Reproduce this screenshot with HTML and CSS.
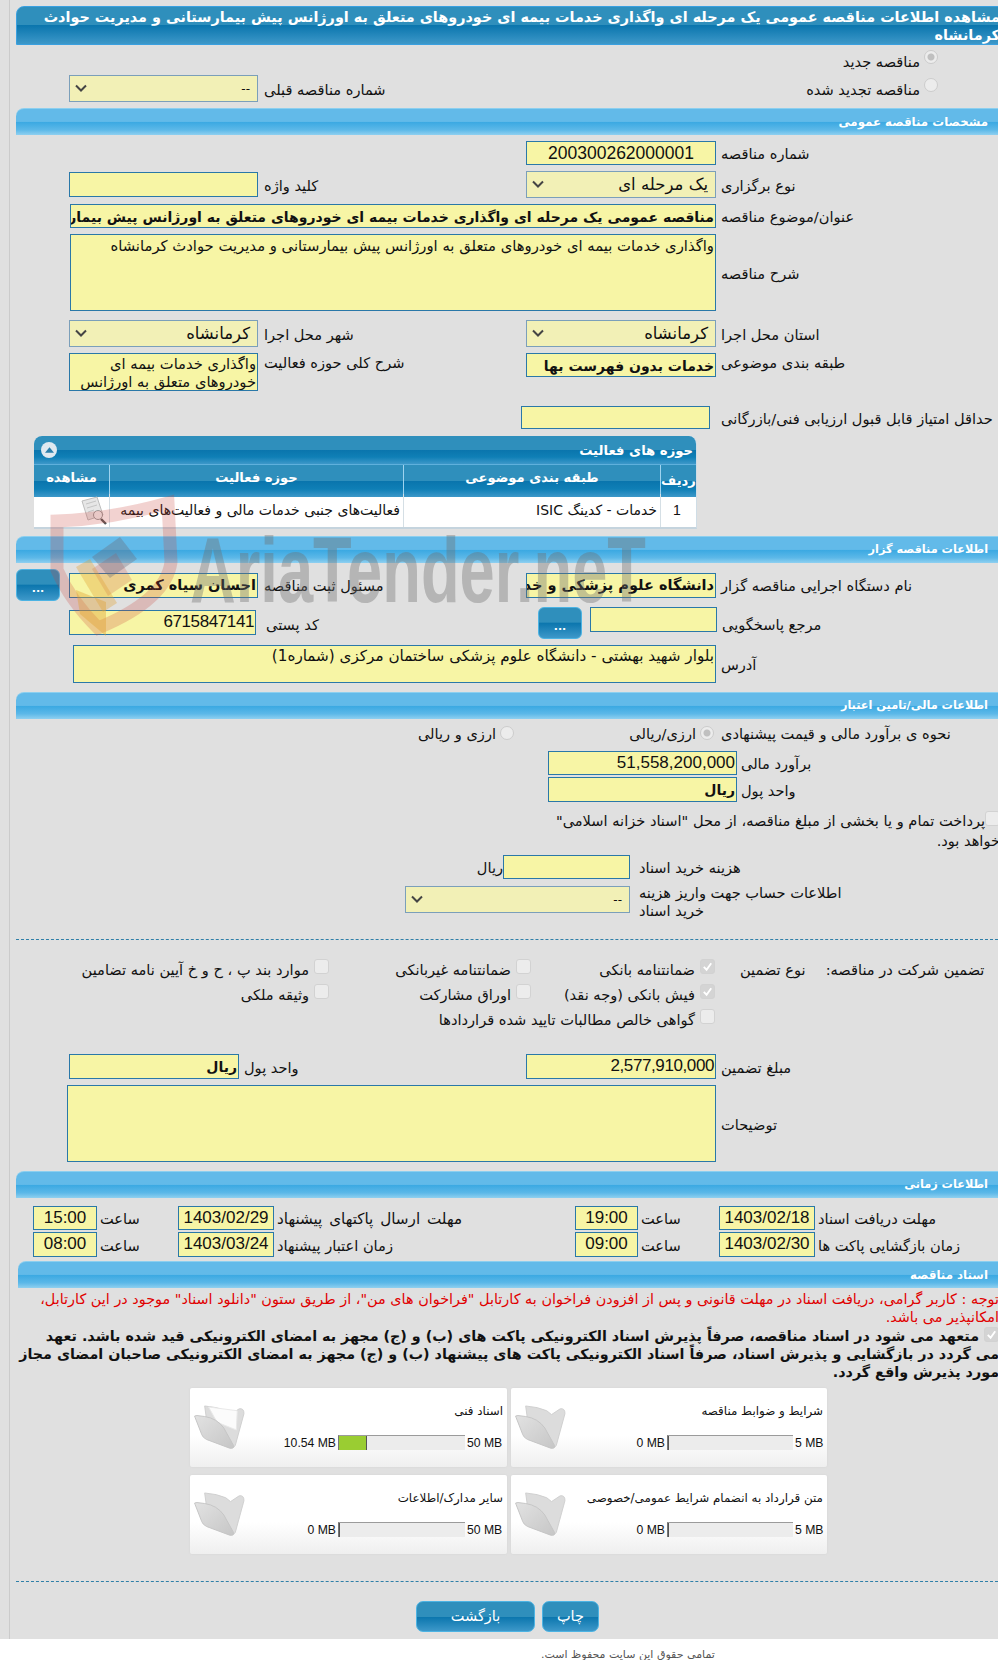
FILE: index.html
```html
<!DOCTYPE html>
<html lang="fa">
<head>
<meta charset="utf-8">
<title>مشاهده اطلاعات مناقصه</title>
<link rel="stylesheet" href="styles.css">
</head>
<body>
<div class="page">
<div class="content">

<div class="title-bar" dir="rtl">مشاهده اطلاعات مناقصه عمومی یک مرحله ای واگذاری خدمات بیمه ای خودروهای متعلق به اورژانس پیش بیمارستانی و مدیریت حوادث<br>کرمانشاه</div>

<div class="sec-a">
  <div class="row radio-top">
    <div class="cell-l"></div>
    <div class="radio-new"><span class="lb" dir="rtl">مناقصه جدید</span><span class="radio on"></span></div>
  </div>
  <div class="row prev-row">
    <div class="cell-l">
      <div class="fld sel w189 h27" dir="rtl"><span>--</span><svg class="chev" viewBox="0 0 12 8"><path d="M1 1.5l5 5 5-5" /></svg></div>
      <span class="lb" dir="rtl">شماره مناقصه قبلی</span>
    </div>
    <div class="radio-new"><span class="lb" dir="rtl">مناقصه تجدید شده</span><span class="radio"></span></div>
  </div>
</div>

<div class="sec-head first">مشخصات مناقصه عمومی</div>

<div class="stack">
  <div class="row">
    <div class="cell-l"></div>
    <div class="cell-r">
      <div class="fld w190 h24 num center wide-num">200300262000001</div>
      <span class="lb" dir="rtl">شماره مناقصه</span>
    </div>
  </div>
  <div class="row">
    <div class="cell-l">
      <div class="fld w189 h25 self-c"></div>
      <span class="lb" dir="rtl">کلید واژه</span>
    </div>
    <div class="cell-r">
      <div class="fld sel w190 h27 big" dir="rtl"><span>یک مرحله ای</span><svg class="chev" viewBox="0 0 12 8"><path d="M1 1.5l5 5 5-5" /></svg></div>
      <span class="lb" dir="rtl">نوع برگزاری</span>
    </div>
  </div>
  <div class="row">
    <div class="cell-l1">
      <div class="fld w646 h24 bold" dir="rtl">مناقصه عمومی یک مرحله ای واگذاری خدمات بیمه ای خودروهای متعلق به اورژانس پیش بیمارستانی و مدیریت حوادث کرمانشاه</div>
      <span class="lb" dir="rtl">عنوان/موضوع مناقصه</span>
    </div>
  </div>
  <div class="row">
    <div class="cell-l1">
      <div class="fld w646 h77 area" dir="rtl">واگذاری خدمات بیمه ای خودروهای متعلق به اورژانس پیش بیمارستانی و مدیریت حوادث کرمانشاه</div>
      <span class="lb" dir="rtl">شرح مناقصه</span>
    </div>
  </div>
  <div class="row mt3">
    <div class="cell-l">
      <div class="fld sel w189 h27 big" dir="rtl"><span>کرمانشاه</span><svg class="chev" viewBox="0 0 12 8"><path d="M1 1.5l5 5 5-5" /></svg></div>
      <span class="lb" dir="rtl">شهر محل اجرا</span>
    </div>
    <div class="cell-r">
      <div class="fld sel w190 h27 big" dir="rtl"><span>کرمانشاه</span><svg class="chev" viewBox="0 0 12 8"><path d="M1 1.5l5 5 5-5" /></svg></div>
      <span class="lb" dir="rtl">استان محل اجرا</span>
    </div>
  </div>
  <div class="row">
    <div class="cell-l top">
      <div class="fld w189 h38 area wrap" dir="rtl">واگذاری خدمات بیمه ای<br>خودروهای متعلق به اورژانس</div>
      <span class="lb lb-top" dir="rtl">شرح کلی حوزه فعالیت</span>
    </div>
    <div class="cell-r top">
      <div class="fld w190 h24 bold" dir="rtl">خدمات بدون فهرست بها</div>
      <span class="lb lb-top" dir="rtl">طبقه بندی موضوعی</span>
    </div>
  </div>
  <div class="row mt9">
    <div class="cell-l cell-short"></div>
    <div class="cell-r gap11">
      <div class="fld w189 h23"></div>
      <span class="lb" dir="rtl">حداقل امتیاز قابل قبول ارزیابی فنی/بازرگانی</span>
    </div>
  </div>
</div>

<div class="panel">
  <div class="panel-title" dir="rtl"><span>حوزه های فعالیت</span><span class="collapse"><svg viewBox="0 0 10 6"><path d="M5 0l5 6H0z"/></svg></span></div>
  <div class="grid-head">
    <div>مشاهده</div><div>حوزه فعالیت</div><div>طبقه بندی موضوعی</div><div class="radif">ردیف</div>
  </div>
  <div class="grid-row">
    <div class="view-cell"><svg class="doc" viewBox="0 0 30 30"><path d="M3 5l15-4 6 18-15 5z" fill="#e6e6e6" stroke="#bdbdbd"/><path d="M7 8l10-3M8 12l10-3M9 16l6-2" stroke="#c4c4c4" fill="none"/><circle cx="19" cy="19" r="4.5" fill="#f3f3f3" stroke="#9a9a9a"/><path d="M22 23l5 5" stroke="#555" stroke-width="2.4"/></svg></div>
    <div dir="rtl">فعالیت‌های جنبی خدمات مالی و فعالیت‌های بیمه</div>
    <div dir="rtl">خدمات - کدینگ ISIC</div>
    <div class="num-cell">1</div>
  </div>
</div>

<div class="sec-head">اطلاعات مناقصه گزار</div>

<div class="stack s2">
  <div class="row h32">
    <div class="cell-l">
      <div class="dots-btn pull">...</div>
      <div class="fld w189 h25 big-b" dir="rtl">احسان سیاه کمری</div>
      <span class="lb" dir="rtl">مسئول ثبت مناقصه</span>
    </div>
    <div class="cell-r">
      <div class="fld w190 h25 big-b" dir="rtl">دانشگاه علوم پزشکی و خدمات بهداشتی درمانی کرمانشاه</div>
      <span class="lb" dir="rtl">نام دستگاه اجرایی مناقصه گزار</span>
    </div>
  </div>
  <div class="row h32">
    <div class="cell-l top-3">
      <div class="fld w187 h25 num end tight-num">6715847141</div>
      <span class="lb lb-wide" dir="rtl">کد پستی</span>
    </div>
    <div class="cell-r top ref">
      <div class="dots-btn tall">...</div>
      <div class="fld w127 h25"></div>
      <span class="lb" dir="rtl">مرجع پاسخگویی</span>
    </div>
  </div>
  <div class="row addr">
    <div class="fld w643 h38 area addr-text" dir="rtl">بلوار شهید بهشتی - دانشگاه علوم پزشکی ساختمان مرکزی (شماره1)</div>
    <span class="lb" dir="rtl">آدرس</span>
  </div>
</div>

<div class="sec-head gap9">اطلاعات مالی/تامین اعتبار</div>

<div class="finance">
  <div class="fin-radio">
    <div class="radio-group"><span class="lb" dir="rtl">ارزی و ریالی</span><span class="radio"></span></div>
    <div class="radio-group"><span class="lb" dir="rtl">ارزی/ریالی</span><span class="radio on"></span></div>
    <span class="lb" dir="rtl">نحوه ی برآورد مالی و قیمت پیشنهادی</span>
  </div>
  <div class="row fin-field">
    <div class="fld w189 h24 num end">51,558,200,000</div>
    <span class="lb" dir="rtl">برآورد مالی</span>
  </div>
  <div class="row fin-field tight">
    <div class="fld w189 h25 bold" dir="rtl">ریال</div>
    <span class="lb" dir="rtl">واحد پول</span>
  </div>
  <div class="treasury" dir="rtl"><span class="check"></span>پرداخت تمام و یا بخشی از مبلغ مناقصه، از محل "اسناد خزانه اسلامی"<br>خواهد بود.</div>
  <div class="row purchase">
    <span class="rial" dir="rtl">ریال</span>
    <div class="fld w127 h24"></div>
    <span class="lb" dir="rtl">هزینه خرید اسناد</span>
  </div>
  <div class="row account">
    <div class="fld sel w225 h27" dir="rtl"><span>--</span><svg class="chev" viewBox="0 0 12 8"><path d="M1 1.5l5 5 5-5" /></svg></div>
    <span class="lb two" dir="rtl">اطلاعات حساب جهت واریز هزینه<br>خرید اسناد</span>
  </div>
</div>

<div class="dash d1"></div>

<div class="guarantee">
  <div class="guar-grid">
    <label class="opt" dir="rtl"><span class="check"></span>موارد بند پ ، ح و خ آیین نامه تضامین</label>
    <label class="opt" dir="rtl"><span class="check"></span>ضمانتنامه غیربانکی</label>
    <label class="opt" dir="rtl"><span class="check tick"><svg viewBox="0 0 14 14"><path d="M3 7.5l3 3 5-7"/></svg></span>ضمانتنامه بانکی</label>
    <label class="opt" dir="rtl"><span class="check"></span>وثیقه ملکی</label>
    <label class="opt" dir="rtl"><span class="check"></span>اوراق مشارکت</label>
    <label class="opt" dir="rtl"><span class="check tick"><svg viewBox="0 0 14 14"><path d="M3 7.5l3 3 5-7"/></svg></span>فیش بانکی (وجه نقد)</label>
    <label class="opt wide" dir="rtl"><span class="check"></span>گواهی خالص مطالبات تایید شده قراردادها</label>
  </div>
  <div class="guar-labels">
    <span class="lb" dir="rtl">نوع تضمین</span>
    <span class="lb" dir="rtl">تضمین شرکت در مناقصه:</span>
  </div>
</div>

<div class="stack s3">
  <div class="row">
    <div class="cell-l">
      <div class="fld w170 h25 bold" dir="rtl">ریال</div>
      <span class="lb lb-wider" dir="rtl">واحد پول</span>
    </div>
    <div class="cell-r">
      <div class="fld w190 h25 num end tight-num">2,577,910,000</div>
      <span class="lb" dir="rtl">مبلغ تضمین</span>
    </div>
  </div>
  <div class="row notes">
    <div class="fld w649 h77"></div>
    <span class="lb" dir="rtl">توضیحات</span>
  </div>
</div>

<div class="sec-head gap9">اطلاعات زمانی</div>

<div class="dates">
  <div class="date-row">
    <div class="fld h24 num center">15:00</div><span class="lb" dir="rtl">ساعت</span>
    <div class="fld h24 num center">1403/02/29</div><span class="lb spaced" dir="rtl">مهلت ارسال پاکتهای پیشنهاد</span>
    <div class="fld h24 num center">19:00</div><span class="lb" dir="rtl">ساعت</span>
    <div class="fld h24 num center">1403/02/18</div><span class="lb" dir="rtl">مهلت دریافت اسناد</span>
  </div>
  <div class="date-row">
    <div class="fld h25 num center">08:00</div><span class="lb" dir="rtl">ساعت</span>
    <div class="fld h25 num center">1403/03/24</div><span class="lb" dir="rtl">زمان اعتبار پیشنهاد</span>
    <div class="fld h25 num center">09:00</div><span class="lb" dir="rtl">ساعت</span>
    <div class="fld h25 num center">1403/02/30</div><span class="lb" dir="rtl">زمان بازگشایی پاکت ها</span>
  </div>
</div>

<div class="sec-head docs">اسناد مناقصه</div>

<div class="red-note" dir="rtl">توجه : کاربر گرامی، دریافت اسناد در مهلت قانونی و پس از افزودن فراخوان به کارتابل "فراخوان های من"، از طریق ستون "دانلود اسناد" موجود در این کارتابل،<br>امکانپذیر می باشد.</div>
<div class="bold-note" dir="rtl"><span class="check tick"><svg viewBox="0 0 14 14"><path d="M3 7.5l3 3 5-7"/></svg></span>متعهد می شود در اسناد مناقصه، صرفاً پذیرش اسناد الکترونیکی پاکت های (ب) و (ج) مجهز به امضای الکترونیکی قید شده باشد. تعهد<br>می گردد در بازگشایی و پذیرش اسناد، صرفاً اسناد الکترونیکی پاکت های پیشنهاد (ب) و (ج) مجهز به امضای الکترونیکی صاحبان امضای مجاز<br>مورد پذیرش واقع گردد.</div>

<div class="cards">
  <div class="card">
    <svg class="folder" viewBox="0 0 54 48"><use href="#fld-back"/><path d="M15 2l30 4-1 20-20-8z" fill="#fbfbfb" stroke="#e8e8e8"/><use href="#fld-front"/></svg>
    <div class="card-body">
      <div class="card-title" dir="rtl">اسناد فنی</div>
      <div class="bar-row"><span>10.54 MB</span><div class="bar"><i style="width:22%"></i></div><span class="max">50 MB</span></div>
    </div>
  </div>
  <div class="card">
    <svg class="folder" viewBox="0 0 54 48"><use href="#fld-back"/><use href="#fld-front"/></svg>
    <div class="card-body">
      <div class="card-title" dir="rtl">شرایط و ضوابط مناقصه</div>
      <div class="bar-row small"><span>0 MB</span><div class="bar"><i style="width:1%"></i></div><span class="max">5 MB</span></div>
    </div>
  </div>
  <div class="card">
    <svg class="folder" viewBox="0 0 54 48"><use href="#fld-back"/><use href="#fld-front"/></svg>
    <div class="card-body">
      <div class="card-title" dir="rtl">سایر مدارک/اطلاعات</div>
      <div class="bar-row"><span>0 MB</span><div class="bar"><i style="width:1%"></i></div><span class="max">50 MB</span></div>
    </div>
  </div>
  <div class="card">
    <svg class="folder" viewBox="0 0 54 48"><use href="#fld-back"/><use href="#fld-front"/></svg>
    <div class="card-body">
      <div class="card-title" dir="rtl">متن قرارداد به انضمام شرایط عمومی/خصوصی</div>
      <div class="bar-row small"><span>0 MB</span><div class="bar"><i style="width:1%"></i></div><span class="max">5 MB</span></div>
    </div>
  </div>
</div>

<div class="dash d2"></div>

<div class="actions">
  <div class="btn back">بازگشت</div>
  <div class="btn print">چاپ</div>
</div>

<svg class="watermark" viewBox="40 490 620 155" aria-hidden="true">
  <path d="M57 521Q112 519 168 503L171 562Q166 600 98 628Q70 600 57 570z" fill="none" stroke="#c8443a" stroke-opacity=".24" stroke-width="13"/>
  <path d="M92 569l24-16 16 27-24 16z" fill="#c8443a" fill-opacity=".22"/>
  <path d="M76 567l14-8 27 44-14 9z" fill="#e0a030" fill-opacity=".35"/>
  <path d="M76 590l30 12 0 34-26-22z" fill="#e0a030" fill-opacity=".4"/>
  <path d="M92 557l28-20 17 22-27 19z" fill="#6a6a78" fill-opacity=".35"/>
  <text class="wm-text" x="190" y="602" textLength="456" lengthAdjust="spacingAndGlyphs">AriaTender.neT</text>
</svg>

</div>
</div>
<div class="footer"><span dir="rtl">تمامی حقوق این سایت محفوظ است.</span></div>

<svg class="defs" aria-hidden="true">
  <defs>
    <linearGradient id="fold-g" x1="0" y1="0" x2="1" y2="1"><stop offset="0" stop-color="#e2e2e2"/><stop offset="1" stop-color="#c6c6c6"/></linearGradient>
    <g id="fld-back"><path d="M11 1Q24 2 33 6L38 10 47 4Q52 3 52 9L43 42Q41 46 36 44L15 30Z" fill="#dcdcdc" stroke="#cfcfcf"/></g>
    <g id="fld-front"><path d="M1 13Q-1 11 3 11L11 12Q24 14 31 24L41 42Q42 46 37 45L13 36Q9 34 8 31Z" fill="url(#fold-g)" stroke="#c4c4c4"/></g>
  </defs>
</svg>
</body>
</html>
```

FILE: styles.css
```css
* { box-sizing: border-box; }
html, body { margin: 0; padding: 0; overflow: hidden; background: #fff; width: 998px; height: 1660px; }
body { font-family: "DejaVu Sans", sans-serif; font-size: 14.6px; color: #111; }

.page { background: #e0e0e0; width: 998px; height: 1639px; padding-left: 9px; }
.content { position: relative; width: 996px; height: 1639px; border-left: 1px solid #cbcbcb; padding-left: 6px; padding-top: 6px; }

.title-bar {
  width: 989px; height: 39px; padding: 1px 4px 0 0; color: #fff; font-weight: bold; font-size: 14.4px; line-height: 18px; white-space: nowrap;
  border: 1px solid #3aa0e0; border-radius: 8px 0 0 0; overflow: hidden;
  background: linear-gradient(#2f8fbc 0, #2f8fbc 48%, #0a75ad 49%, #3d98c9 100%);
}

.sec-head {
  width: 982px; height: 27px; margin-top: 7px; line-height: 26px; text-align: right; padding-right: 10px;
  direction: rtl; color: #fff; font-weight: bold; font-size: 11.3px; border-top: 1px solid #8ccfef; border-radius: 8px 0 0 0;
  background: linear-gradient(#62bae9 0, #62bae9 48%, #39a8e2 49%, #5cb8e8 80%, #8fd0f0 100%);
}
.sec-head.first { margin-top: 0; font-size: 11.8px; }
.sec-head.gap9 { margin-top: 9px; }
.sec-head.docs { margin-top: 4px; margin-left: 2px; width: 980px; font-size: 11.8px; }

.row { display: flex; padding-left: 53px; }
.cell-l { width: 457px; display: flex; gap: 6px; align-items: center; flex: none; }
.cell-r { display: flex; gap: 5px; align-items: center; }
.cell-l1 { display: flex; gap: 5px; align-items: center; margin-left: 1px; }
.cell-l.top, .cell-r.top { align-items: flex-start; }
.cell-l.top-3 { align-items: flex-start; padding-top: 3px; }
.cell-short { width: 452px; }
.gap11 { gap: 11px; }
.ref { margin-left: 12px; gap: 8px; }
.ref .lb { margin-left: -3px; line-height: 32px; }
.lb { white-space: nowrap; text-align: left; line-height: 18px; flex: none; padding-top: 2px; }
.lb-top { padding-top: 1px; }
.lb-wide { margin-left: 4px; line-height: 25px; }
.lb-wider { margin-left: -1px; }
.spaced { font-size: 15.2px; word-spacing: 2px; }

.fld {
  background: #f7f5a5; border: 1px solid #2a78a8; flex: none; overflow: hidden; white-space: nowrap; font-size: 14.5px; padding: 0 1px; line-height: 20px;
}
.sel { background: #f2f0b6; border-color: #7b9fba; display: flex; align-items: center; justify-content: space-between; padding: 0 7px 0 5px; font-size: 12px; }
.chev { width: 12px; height: 8px; fill: none; stroke: #444; stroke-width: 2; margin-top: -2px; }
.big { font-size: 16.5px; }
.bold { font-weight: bold; font-size: 14px; line-height: 24px; }
.big-b { font-weight: bold; font-size: 14.5px; line-height: 23px; }
.num { font-family: "Liberation Sans", sans-serif; font-size: 17px; line-height: 22px; padding: 0 1px; }
.wide-num { font-size: 17.5px; }
.tight-num { letter-spacing: -.4px; }
.center { text-align: center; }
.end { text-align: right; }
.area { font-size: 14.8px; line-height: 19px; white-space: nowrap; padding-top: 1px; }
.addr-text { font-size: 15.2px; }
.wrap { font-size: 14.7px; line-height: 18px; }

.w127 { width: 127px; } .w170 { width: 170px; } .w187 { width: 187px; } .w189 { width: 189px; } .w190 { width: 190px; } .w225 { width: 225px; }
.w643 { width: 643px; } .w646 { width: 646px; } .w649 { width: 649px; }
.h23 { height: 23px; } .h24 { height: 24px; } .h25 { height: 25px; } .h27 { height: 27px; } .h38 { height: 38px; } .h77 { height: 77px; }
.self-c { align-self: center; }

.sec-a { height: 63px; }
.radio-top { height: 25px; padding-top: 6px; align-items: center; }
.prev-row { height: 27px; margin-top: 5px; align-items: center; }
.radio-new { display: flex; gap: 4px; justify-content: flex-end; align-items: center; width: 412px; }
.radio { width: 14px; height: 14px; border-radius: 50%; background: #ececec; border: 1px solid #ccc; flex: none; margin-top: -8px; }
.radio.on { background: radial-gradient(circle, #c0c0c0 0 3px, #ececec 4px); }

.stack { display: flex; flex-direction: column; gap: 6px; padding-top: 6px; }
.mt3 { margin-top: 3px; }
.mt9 { margin-top: 9px; }

.panel { width: 663px; margin: 7px 0 0 18px; border-radius: 8px 8px 0 0; overflow: hidden; background: #fff; border-bottom: 2px solid #c5d4de; border-right: 1px solid #cfdde6; height: 93px; }
.panel-title, .grid-head > div {
  background: linear-gradient(#2f8fbc 0, #2f8fbc 50%, #0a75ad 51%, #0f7fb6 75%, #3d98c9 100%);
}
.panel-title { height: 29px; display: flex; justify-content: space-between; align-items: center; padding: 0 3px 0 7px; color: #fff; font-weight: bold; font-size: 13.2px; border-bottom: 1px solid #5fb0dc; }
.collapse { width: 16px; height: 16px; border-radius: 50%; background: #dfe9f0; display: flex; align-items: center; justify-content: center; }
.collapse svg { width: 9px; height: 6px; fill: #2b7fab; }
.grid-head, .grid-row { display: grid; grid-template-columns: 76px 294px 257px 35px; }
.grid-head { height: 29px; color: #fff; font-weight: bold; font-size: 13.1px; text-align: center; }
.grid-head > div { line-height: 26px; border-right: 1px solid #9ed3ef; }
.grid-head > div:last-child { border-right: 0; line-height: 32px; }
.grid-row { height: 33px; line-height: 32px; font-size: 14px; background: #fff; }
.grid-row > div { border-right: 1px solid #d5dfe5; padding-right: 3px; white-space: nowrap; overflow: hidden; }
.grid-row > div:last-child { border-right: 0; }
.num-cell { text-align: center; font-family: "Liberation Sans", sans-serif; font-size: 14px; }
.view-cell { position: relative; }
.doc { width: 30px; height: 30px; position: absolute; left: 45px; top: 2px; }

.h32 { height: 32px; }
.dots-btn { color: #fff; font-weight: bold; font-size: 11px; text-align: center; width: 44px; height: 32px; line-height: 38px; border: 1px solid #4cb3e3; border-radius: 6px; flex: none;
  background: linear-gradient(#2f8fbc 0, #2f8fbc 48%, #0a75ad 49%, #3d98c9 100%); }
.dots-btn.pull { margin-left: -53px; margin-right: 3px; }
.addr { padding-left: 57px; gap: 5px; align-items: center; }

.finance { padding-top: 7px; }
.fin-radio { display: grid; grid-template-columns: 94px 200px auto; align-items: flex-start; height: 21px; padding-left: 404px; }
.fin-radio > :nth-child(2) { justify-self: end; width: 94px; }
.fin-radio > .lb { margin-left: 7px; margin-top: -3px; }
.radio-group { display: flex; gap: 4px; justify-content: flex-end; align-items: flex-start; }
.radio-group .lb { margin-top: -3px; }
.radio-group .radio { margin-top: 0; }
.fin-field { padding-left: 532px; gap: 4px; align-items: center; margin-top: 4px; }
.fin-field.tight { margin-top: 2px; }
.treasury { margin-top: 9px; height: 39px; line-height: 20px; white-space: nowrap; width: 984px; }
.treasury .check { vertical-align: top; margin-top: 0; }
.purchase { padding-left: 463px; margin-top: 5px; align-items: center; }
.purchase .lb { margin-left: 9px; }
.rial { width: 24px; white-space: nowrap; text-align: right; }
.account { padding-left: 389px; margin-top: 7px; gap: 9px; align-items: flex-start; height: 27px; }
.two { margin-top: -4px; }

.check { width: 15px; height: 15px; border-radius: 3px; background: #ececec; border: 1px solid #d2d2d2; display: inline-block; flex: none; }
.check.tick { background: #d4d4d4; }
.check svg { display: block; fill: none; stroke: #fff; stroke-width: 2; }

.dash { width: 982px; border-top: 1px dashed #2f7fa8; }
.d1 { margin-top: 26px; }
.guarantee { display: flex; padding-left: 67px; margin-top: 19px; height: 90px; }
.guar-grid { display: grid; grid-template-columns: 246px 202px 184px; grid-auto-rows: 25px; width: 632px; flex: none; }
.opt { display: flex; gap: 5px; align-items: flex-start; white-space: nowrap; line-height: 22px; }
.opt.wide { grid-column: 1 / 4; }
.guar-labels { display: flex; gap: 20px; margin-left: 25px; height: 18px; }

.s3 { padding-top: 5px; }
.notes { padding-left: 51px; gap: 5px; align-items: center; }

.dates { display: flex; flex-direction: column; gap: 2px; padding: 8px 0 0 17px; }
.date-row { display: grid; grid-template-columns: 64px 81px 96px 301px 63px 81px 96px auto; align-items: center; }
.date-row .lb { padding-left: 3px; }

.red-note { color: #e00000; width: 978px; margin-left: 5px; white-space: nowrap; line-height: 18px; font-size: 14.4px; padding-top: 2px; }
.bold-note { width: 978px; margin-left: 5px; font-weight: bold; font-size: 14.3px; line-height: 18px; white-space: nowrap; margin-top: 1px; }
.bold-note .check { float: right; margin: 0 0 0 5px; }

.cards { display: grid; grid-template-columns: 317px 316px; gap: 8px 4px; padding-left: 174px; margin-top: 7px; }
.card { height: 79px; position: relative; border-radius: 2px; background: linear-gradient(#fff 0, #fff 60%, #efefef 100%); box-shadow: 0 0 2px #d0d0d0; padding: 14px 4px 0 56px; }
.folder { position: absolute; left: 4px; top: 17px; width: 52px; height: 46px; }
.card-title { white-space: nowrap; text-align: right; font-size: 11.9px; line-height: 18px; }
.bar-row { display: flex; justify-content: flex-end; align-items: center; gap: 2px; margin-top: 15px; font-family: "Liberation Sans", sans-serif; font-size: 12.2px; padding-right: 1px; }
.max { width: 35px; white-space: nowrap; }
.small .max { width: 27px; }
.small .bar { width: 126px; }
.bar { width: 127px; height: 15px; background: #ececec; border-top: 1px solid #9b9b9b; border-left: 1px solid #777; }
.bar i { display: block; height: 14px; background: #9acd32; border-right: 1px solid #555; }

.d2 { margin-top: 27px; }
.actions { display: flex; gap: 7px; padding-left: 400px; margin-top: 19px; }
.btn { height: 31px; color: #fff; font-size: 14.5px; text-align: center; line-height: 29px; border: 1px solid #4cb3e3; border-radius: 7px;
  background: linear-gradient(#2f8fbc 0, #2f8fbc 50%, #0a75ad 51%, #3d98c9 100%); }
.back { width: 119px; }
.print { width: 57px; }

.watermark { position: absolute; left: 30px; top: 490px; width: 620px; height: 155px; pointer-events: none; }
.wm-text { font-family: "Liberation Sans", sans-serif; font-weight: bold; font-size: 92px; fill: #6e6e6e; fill-opacity: .38; }

.footer { height: 21px; margin-left: 10px; background: #fff; position: relative; overflow: hidden; }
.footer span { position: absolute; left: 531px; top: 9px; white-space: nowrap; font-size: 11px; color: #555; }
.defs { position: absolute; width: 0; height: 0; }
```
